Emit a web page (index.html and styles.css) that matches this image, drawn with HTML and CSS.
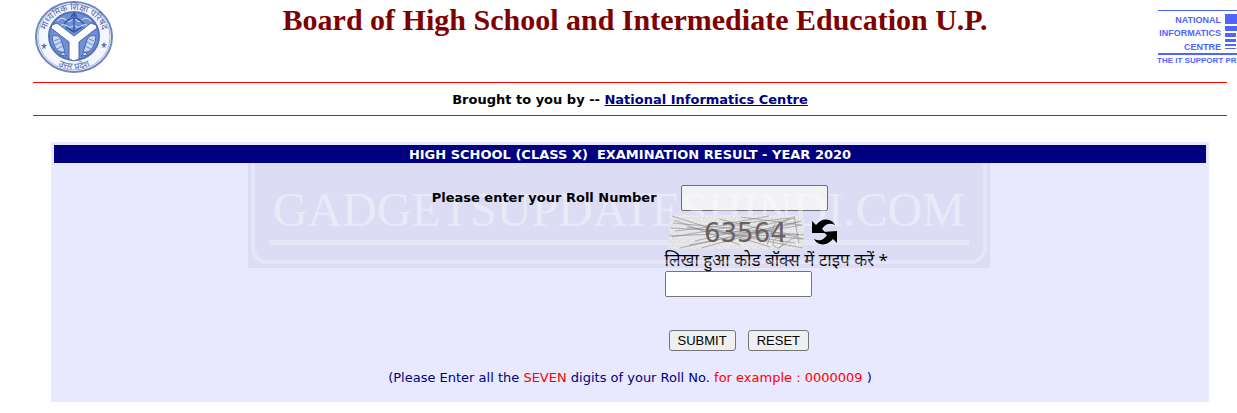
FILE: index.html
```html
<!DOCTYPE html>
<html lang="en">
<head>
    <meta charset="UTF-8">
    <meta name="viewport" content="width=device-width, initial-scale=1.0">
    <title>Board of High School and Intermediate Education U.P.</title>
    <link rel="stylesheet" href="styles.css">
</head>
<body>
    <header class="header">
        <svg class="emblem" viewBox="0 0 78 74" role="img" aria-label="Board emblem">
            <defs>
                <path id="arc-top" d="M11 44A29 27 0 1 1 67 44"/>
                <path id="arc-bottom" d="M9 52A34 33 0 0 0 69 52"/>
            </defs>
            <ellipse cx="39" cy="37" rx="38" ry="35" fill="#fff" stroke="#6f86be" stroke-width="2"/>
            <ellipse cx="39" cy="37" rx="36" ry="33" fill="#f3f6fc" stroke="#a9b9dd" stroke-width="1"/>
            <ellipse cx="39" cy="36" rx="25" ry="24" fill="#6f90d4" stroke="#5873b4" stroke-width="2"/>
            <g fill="none" stroke="#dce6fa" stroke-width="1">
                <path d="M22 21q5-5 9-1t8-3q4 7 8 3t9 1"/>
                <path d="M24 26q5-3 8 0t7-1q4 4 7 1t8 0"/>
            </g>
            <path d="M39 14v18M36 17l3-4 3 4M29 24q10-12 20 0M31 27l8 5 8-5" fill="none" stroke="#3558a4" stroke-width="1.5"/>
            <path d="M17 25l5-2 17 13 17-13 5 2 1 3-18 14v17l-5 2-5-2V42L16 28z" fill="#fff" stroke="#4564aa" stroke-width="1"/>
            <g fill="#c8d8f4" stroke="#4767ad" stroke-width="1">
                <path d="M17 36q7-2 9 4t4 12q-7 1-10-5t-3-11z"/>
                <path d="M61 36q-7-2-9 4t-4 12q7 1 10-5t3-11z"/>
                <path d="M28 52l4 4-7-1zM50 52l-4 4 7-1z"/>
            </g>
            <g fill="none" stroke="#6f8bc8" stroke-width="1">
                <path d="M19 41l5-2M20 45l6-3M22 49l6-3M59 41l-5-2M58 45l-6-3M56 49l-6-3"/>
            </g>
            <g fill="#5a74b4">
                <path d="M9 43l1 2 2 0-2 2 1 2-2-1-2 1 1-2-2-2 2 0zM69 42l1 2 2 0-2 2 1 2-2-1-2 1 1-2-2-2 2 0z"/>
            </g>
            <g class="emblem-text">
                <text><textPath href="#arc-top" startOffset="50%">माध्यमिक शिक्षा परिषद</textPath></text>
                <text><textPath href="#arc-bottom" startOffset="50%">उत्तर प्रदेश</textPath></text>
            </g>
        </svg>
        <h1>Board of High School and Intermediate Education U.P.</h1>
        <svg class="nic" viewBox="0 0 100 60" role="img" aria-label="National Informatics Centre">
            <g fill="#5064ff">
                <path d="M1 2h99v1H1zM1 45h99v2H1z"/>
                <path d="M68 6h32v10H68zM68 18h32v5H68zM68 25h32v4H68zM68 31h32v3H68zM68 36h32v2H68zM68 40h32v1H68z"/>
                <path d="M79 25h1v18h-1z" fill="#fff"/>
            </g>
            <g class="nic-name">
                <text x="64" y="15">NATIONAL</text>
                <text x="64" y="28">INFORMATICS</text>
                <text x="64" y="42">CENTRE</text>
            </g>
            <text class="nic-tag" x="0" y="55">THE IT SUPPORT PR</text>
        </svg>
    </header>

    <p class="credit">Brought to you by -- <a href="#">National Informatics Centre</a></p>

    <form class="panel">
        <h2>HIGH SCHOOL (CLASS X)&nbsp; EXAMINATION RESULT - YEAR 2020</h2>
        <div class="fields">
            <label class="roll-label" for="roll">Please enter your Roll Number</label>
            <div class="roll"><input type="text" id="roll"></div>
            <div class="code">
                <div class="captcha-row">
                    <svg class="captcha" viewBox="0 0 135 34" role="img" aria-label="63564">
                        <defs>
                            <pattern id="speckle" width="9" height="7" patternUnits="userSpaceOnUse">
                                <path fill="#e5e5e7" d="M0 0h9v7H0z"/>
                                <path fill="#f0f0f1" d="M1 1h2v1H1zM6 0h1v2H6zM4 4h2v1H4zM8 5h1v1H8z"/>
                                <path fill="#dadadd" d="M3 3h1v1H3zM7 3h1v1H7zM0 5h2v1H0zM5 6h1v1H5z"/>
                            </pattern>
                        </defs>
                        <path fill="url(#speckle)" d="M0 0h135v34H0z"/>
                        <path class="scratch" d="M3 1l98 31M4 8l131 12M2 13l127 7M6 16l115-13M0 21l95-4M5 5l66 25M11 33l121-27M20 30l113-20M32 33l98-26M50 4l85 20M62 8l38-7M40 15l94 18M26 26l100-23M72 2l60 8M18 12l108 16M76 26l48-24M125 1l5 27M98 30l8-22M3 22l70-12M88 20l45 4M110 33l20-14"/>
                        <circle class="scratch" cx="109" cy="28" r="5"/>
                        <text x="35" y="27">63564</text>
                    </svg>
                    <button type="button" class="reload" aria-label="Reload code">
                        <svg viewBox="0 0 25 26">
                            <path d="M0 2l4 4Q10-1 17 1q4 1 6 5-8-4-13 4l4 4H0z"/>
                            <path d="M25 24l-4-4Q15 27 8 25q-4-1-6-5 8 4 13-4l-4-3 14-1z"/>
                        </svg>
                    </button>
                </div>
                <label for="code" lang="hi">लिखा हुआ कोड बॉक्स में टाइप करें *</label>
                <input type="text" id="code">
                <div class="buttons">
                    <button type="submit">SUBMIT</button>
                    <button type="reset">RESET</button>
                </div>
            </div>
        </div>
        <p class="hint">(Please Enter all the <span>SEVEN</span> digits of your Roll No. <span>for example : 0000009</span> )</p>
        <div class="watermark" aria-hidden="true">
            <div class="watermark-frame"><span>GADGETSUPDATESHINDI.COM</span></div>
        </div>
    </form>
</body>
</html>
```

FILE: styles.css
```css
body {
    margin: 0;
    padding: 0 10px 0 33px;
    background-color: #fff;
    color: #000;
    font-family: Verdana, "DejaVu Sans", sans-serif;
    font-size: 13px;
    overflow-x: hidden;
}
.header {
    display: flex;
    align-items: flex-start;
    justify-content: space-between;
    height: 82px;
    margin-right: -30px;
}
.emblem {
    flex: none;
    width: 78px;
    height: 74px;
    margin-left: 2px;
}
.emblem-text {
    fill: #4f69ab;
    font-family: "Noto Sans", "Noto Sans Devanagari", sans-serif;
    font-size: 9px;
    text-anchor: middle;
}
h1 {
    margin: 3px 0 0;
    color: #800000;
    font-family: "Liberation Serif", "Times New Roman", serif;
    font-size: 30px;
    line-height: 34px;
}
.nic {
    flex: none;
    width: 100px;
    height: 60px;
    margin-top: 8px;
}
.nic-name {
    fill: #5064ff;
    font-family: "Liberation Sans", Arial, sans-serif;
    font-size: 9px;
    font-weight: bold;
    text-anchor: end;
}
.nic-tag {
    fill: #5064ff;
    font-family: "Liberation Sans", Arial, sans-serif;
    font-size: 8px;
    font-weight: bold;
}
.credit {
    margin: 0;
    padding-top: 2px;
    border-top: 1px solid #f00;
    border-bottom: 1px solid #f00;
    font-weight: bold;
    line-height: 30px;
    text-align: center;
}
.credit a {
    color: #000080;
}
.panel {
    position: relative;
    width: 97%;
    margin: 26px auto 11px;
    padding: 3px;
    box-sizing: border-box;
    background-color: #e8e8ff;
}
h2 {
    position: relative;
    z-index: 1;
    margin: 0;
    padding-top: 2px;
    background-color: #000080;
    color: #fff;
    font-size: 13px;
    line-height: 16px;
    text-align: center;
}
.fields {
    display: grid;
    grid-template-columns: 53% 1fr;
    row-gap: 4px;
    padding-top: 22px;
}
.roll-label {
    position: relative;
    z-index: 1;
    padding-right: 8px;
    font-weight: bold;
    line-height: 25px;
    text-align: right;
}
.roll {
    padding-left: 16px;
}
input {
    display: block;
    width: 147px;
    height: 26px;
    box-sizing: border-box;
    border: 1px solid #767676;
    border-radius: 2px;
    background-color: #fff;
}
.code {
    grid-column: 2;
}
.code label {
    display: block;
    font-family: "Noto Sans", "Noto Sans Devanagari", sans-serif;
    font-size: 17px;
    line-height: 22px;
}
.captcha-row {
    position: relative;
    z-index: 1;
    display: flex;
    align-items: center;
    gap: 8px;
    padding-left: 4px;
}
.captcha {
    width: 135px;
    height: 34px;
}
.captcha text {
    fill: #6a605e;
    font-family: "DejaVu Sans", sans-serif;
    font-size: 26px;
}
.scratch {
    fill: none;
    stroke: #85858b;
    stroke-width: 1;
    opacity: 0.6;
}
.reload {
    width: 25px;
    height: 26px;
    padding: 0;
    border: 0;
    background: none;
    cursor: pointer;
}
.reload svg {
    display: block;
}
.buttons {
    display: flex;
    gap: 12px;
    padding: 33px 0 0 4px;
}
.buttons button {
    height: 21px;
    padding: 0 8px;
    border: 1px solid #767676;
    border-radius: 3px;
    background-color: #efefef;
    color: #000;
    font-family: "Liberation Sans", Arial, sans-serif;
    font-size: 13px;
    line-height: 18px;
}
.hint {
    margin: 18px 0 12px;
    color: #000080;
    line-height: 18px;
    text-align: center;
}
.hint span {
    color: #f00;
}
.watermark {
    position: absolute;
    top: 9px;
    left: 17%;
    width: 742px;
    height: 117px;
    box-sizing: border-box;
    padding: 0 3px 4px;
    background-color: rgba(0, 0, 60, 0.05);
    pointer-events: none;
}
.watermark-frame {
    height: 100%;
    box-sizing: border-box;
    padding: 25px 14px 0;
    border: 4px solid rgba(255, 255, 255, 0.3);
    border-radius: 16px;
}
.watermark span {
    display: block;
    border-bottom: 5px solid rgba(255, 255, 255, 0.3);
    color: rgba(255, 255, 255, 0.4);
    font-family: "Liberation Serif", "Times New Roman", serif;
    font-size: 48px;
    line-height: 60px;
    text-align: center;
    white-space: nowrap;
}
```
